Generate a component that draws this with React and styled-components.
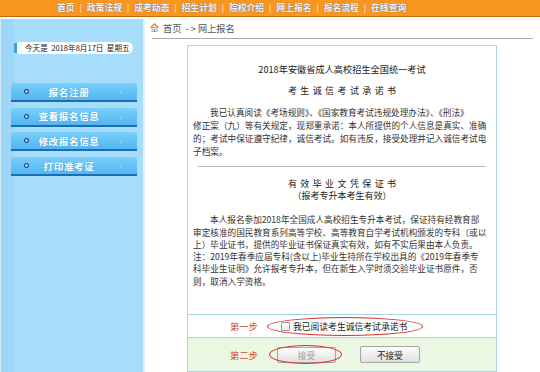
import React from "react";
import styled, { createGlobalStyle } from "styled-components";

const GlobalStyle = createGlobalStyle`
  html, body {
    margin: 0;
    padding: 0;
    background: #fff;
  }
  body {
    width: 540px;
    height: 372px;
    overflow: hidden;
    font-family: "Noto Sans CJK SC", "Microsoft YaHei", sans-serif;
    color: #333;
  }
`;

const TopBar = styled.div`
  height: 16px;
  background: #f8961d;
  border-bottom: 1px solid #c46a06;
  display: flex;
  align-items: center;
  padding-left: 57px;
`;

const NavItem = styled.span`
  font-size: 8.8px;
  font-weight: 700;
  color: #f1f4ff;
  text-shadow: 0 0 1px #3a5fae;
  white-space: nowrap;
  line-height: 16px;
`;

const NavSep = styled.span`
  font-size: 8px;
  color: #fff;
  margin: 0 5px;
  line-height: 16px;
`;

const Layout = styled.div`
  display: flex;
  height: 355px;
`;

const Sidebar = styled.aside`
  width: 143px;
  margin-top: 2px;
  border-right: 2px solid #dff1fc;
  background: linear-gradient(to right, #cdeafb 0 1px, #9dd6f7 1px 14px, #a6ddfb 14px);
  padding-top: 23px;
  display: flex;
  flex-direction: column;
`;

const DateRow = styled.div`
  display: flex;
  align-items: center;
  margin-left: 14px;
  height: 12px;
`;

const DateMark = styled.span`
  width: 3px;
  height: 10px;
  background: #3a9fe2;
`;

const DatePill = styled.span`
  width: 108px;
  height: 12px;
  padding-left: 8px;
  background: #fff;
  border-radius: 3px 6px 6px 3px;
  font-size: 7.6px;
  line-height: 12px;
  color: #1a1a1a;
  white-space: nowrap;
`;

const MenuList = styled.nav`
  margin-top: 29px;
  display: flex;
  flex-direction: column;
  gap: 5.7px;
`;

const MenuButton = styled.a`
  margin-left: 11px;
  width: 126px;
  height: 17px;
  border-bottom: 2px solid #1d6db3;
  border-radius: 3px 3px 0 0;
  background: linear-gradient(#78cffa, #52b6f0);
  display: grid;
  grid-template-columns: 18px 1fr 28px;
  align-items: center;
  text-decoration: none;
`;

const MenuDot = styled.span`
  justify-self: end;
  width: 3px;
  height: 3px;
  border: 1.2px solid #0f2a4a;
  border-radius: 50%;
  background: #9fd8fb;
`;

const MenuText = styled.span`
  text-align: center;
  font-size: 9.6px;
  font-weight: 700;
  color: #fff;
  letter-spacing: 0.6px;
  text-shadow: 0 0 1px #3b8fd0;
  white-space: nowrap;
`;

const MenuArrow = styled.span`
  padding-left: 10px;
  font-size: 8px;
  color: #b6e4fd;
`;

const Main = styled.main`
  flex: 1;
  display: flex;
  flex-direction: column;
`;

const Crumb = styled.div`
  height: 22px;
  padding-left: 5px;
  display: flex;
  align-items: center;
  gap: 4px;
  font-size: 9.2px;
  color: #555;
`;

const Rule = styled.div`
  margin: 0 7px;
  height: 1px;
  background: #a9a9a9;
`;

const Card = styled.section`
  margin: 6px 0 0 42px;
  width: 308px;
  border: 1px solid #a9d4e3;
  display: flex;
  flex-direction: column;
`;

const Title = styled.div`
  margin-top: 16px;
  text-align: center;
  font-size: 9.2px;
  line-height: 14px;
  color: #222;
`;

const Heading = styled.div`
  margin-top: ${(p) => p.$top}px;
  text-align: center;
  font-size: 9px;
  line-height: ${(p) => p.$lh}px;
  letter-spacing: ${(p) => p.$spread}px;
  padding-left: ${(p) => p.$spread}px;
  color: #222;
  white-space: nowrap;
`;

const Para = styled.p`
  margin: ${(p) => p.$top}px 8px 0 5px;
  font-size: 8.65px;
  line-height: ${(p) => p.$lh}px;
  color: #333;
  white-space: nowrap;
`;

const Indent = styled.span`
  padding-left: 17px;
`;

const Hr = styled.div`
  margin: 9px 10px 0;
  height: 1px;
  background: #b9b9b9;
`;

const StepRow = styled.div`
  border-top: 1px solid #a9d4e3;
  height: ${(p) => p.$h}px;
  margin-top: ${(p) => p.$top || 0}px;
  background: ${(p) => p.$bg || "#fff"};
  display: flex;
  align-items: center;
  padding-left: 42px;
`;

const StepLabel = styled.span`
  font-size: 9.3px;
  color: #d2473a;
  margin-right: ${(p) => p.$gap}px;
  white-space: nowrap;
`;

const Oval = styled.span`
  position: relative;
  display: inline-flex;
  align-items: center;
  height: ${(p) => p.$h}px;
  padding: ${(p) => p.$pad};
  gap: 3px;

  &::after {
    content: "";
    position: absolute;
    inset: 0;
    border: 1.6px solid #d4302a;
    border-radius: 50%;
    pointer-events: none;
    z-index: 1;
  }
`;

const Check = styled.span`
  width: 7px;
  height: 7px;
  border: 1px solid #9a9a9a;
  border-radius: 1px;
  background: linear-gradient(#fff, #e9e9e9);
`;

const CheckText = styled.span`
  font-size: 8.8px;
  color: #222;
  white-space: nowrap;
`;

const Button = styled.button`
  width: ${(p) => p.$w}px;
  height: ${(p) => p.$h}px;
  padding: 0;
  border: 1px solid #a5a5a5;
  border-radius: 2px;
  background: linear-gradient(#fdfdfd, #e0e0e0);
  font-family: inherit;
  font-size: 8.6px;
  color: ${(p) => (p.disabled ? "#9a9a9a" : "#222")};
  margin-left: ${(p) => p.$left || 0}px;
`;

const HomeIcon = () => (
  <svg width="9" height="9" viewBox="0 0 9 9">
    <path d="M0.6 4.6 L4.5 1 L8.4 4.6" fill="none" stroke="#e0862a" strokeWidth="1.3" />
    <rect x="2" y="4.4" width="5" height="4" fill="#f4f4f4" stroke="#8a8a8a" strokeWidth="0.7" />
    <rect x="3.8" y="6" width="1.4" height="2.4" fill="#6aa0d8" />
  </svg>
);

const navItems = ["首页", "政策法规", "成考动态", "招生计划", "院校介绍", "网上报名", "报名流程", "在线查询"];
const menuItems = ["报名注册", "查看报名信息", "修改报名信息", "打印准考证"];

const App = () => {
  return (
    <>
      <GlobalStyle />
      <TopBar>
        {navItems.map((item, i) => (
          <React.Fragment key={item}>
            {i > 0 && <NavSep>|</NavSep>}
            <NavItem>{item}</NavItem>
          </React.Fragment>
        ))}
      </TopBar>
      <Layout>
        <Sidebar>
          <DateRow>
            <DateMark />
            <DatePill>今天是&nbsp; 2018年8月17日&nbsp; 星期五</DatePill>
          </DateRow>
          <MenuList>
            {menuItems.map((item) => (
              <MenuButton key={item} href="#">
                <MenuDot />
                <MenuText>{item}</MenuText>
                <MenuArrow>›</MenuArrow>
              </MenuButton>
            ))}
          </MenuList>
        </Sidebar>
        <Main>
          <Crumb>
            <HomeIcon />
            <span>首页&nbsp; - &gt; 网上报名</span>
          </Crumb>
          <Rule />
          <Card>
            <Title>2018年安徽省成人高校招生全国统一考试</Title>
            <Heading $top={8} $lh={14} $spread={3.4}>考生诚信考试承诺书</Heading>
            <Para $top={8} $lh={12.8}>
              <Indent />我已认真阅读《考场规则》、《国家教育考试违规处理办法》、《刑法》<br />
              修正案（九）等有关规定，现郑重承诺：本人所提供的个人信息是真实、准确<br />
              的；考试中保证遵守纪律，诚信考试。如有违反，接受处理并记入诚信考试电<br />
              子档案。
            </Para>
            <Hr />
            <Heading $top={11} $lh={12} $spread={3.4}>有效毕业文凭保证书</Heading>
            <Heading $top={0} $lh={12} $spread={0}>（报考专升本考生有效）</Heading>
            <Para $top={10.8} $lh={12.3}>
              <Indent />本人报名参加2018年全国成人高校招生专升本考试，保证持有经教育部<br />
              审定核准的国民教育系列高等学校、高等教育自学考试机构颁发的专科（或以<br />
              上）毕业证书，提供的毕业证书保证真实有效，如有不实后果由本人负责。<br />
              注：2019年春季应届专科(含以上)毕业生持所在学校出具的《2019年春季专<br />
              科毕业生证明》允许报考专升本，但在新生入学时须交验毕业证书原件，否<br />
              则，取消入学资格。
            </Para>
            <StepRow $h={22} $top={27}>
              <StepLabel $gap={9}>第一步</StepLabel>
              <Oval $h={19} $pad="0 16px 0 14px">
                <Check />
                <CheckText>我已阅读考生诚信考试承诺书</CheckText>
              </Oval>
            </StepRow>
            <StepRow $h={33} $bg="#eaf8e3">
              <StepLabel $gap={11}>第二步</StepLabel>
              <Oval $h={19} $pad="0 6px 0 8px">
                <Button $w={59} $h={16} disabled>接受</Button>
              </Oval>
              <Button $w={60} $h={17} $left={18}>不接受</Button>
            </StepRow>
          </Card>
        </Main>
      </Layout>
    </>
  );
};

export default App;
